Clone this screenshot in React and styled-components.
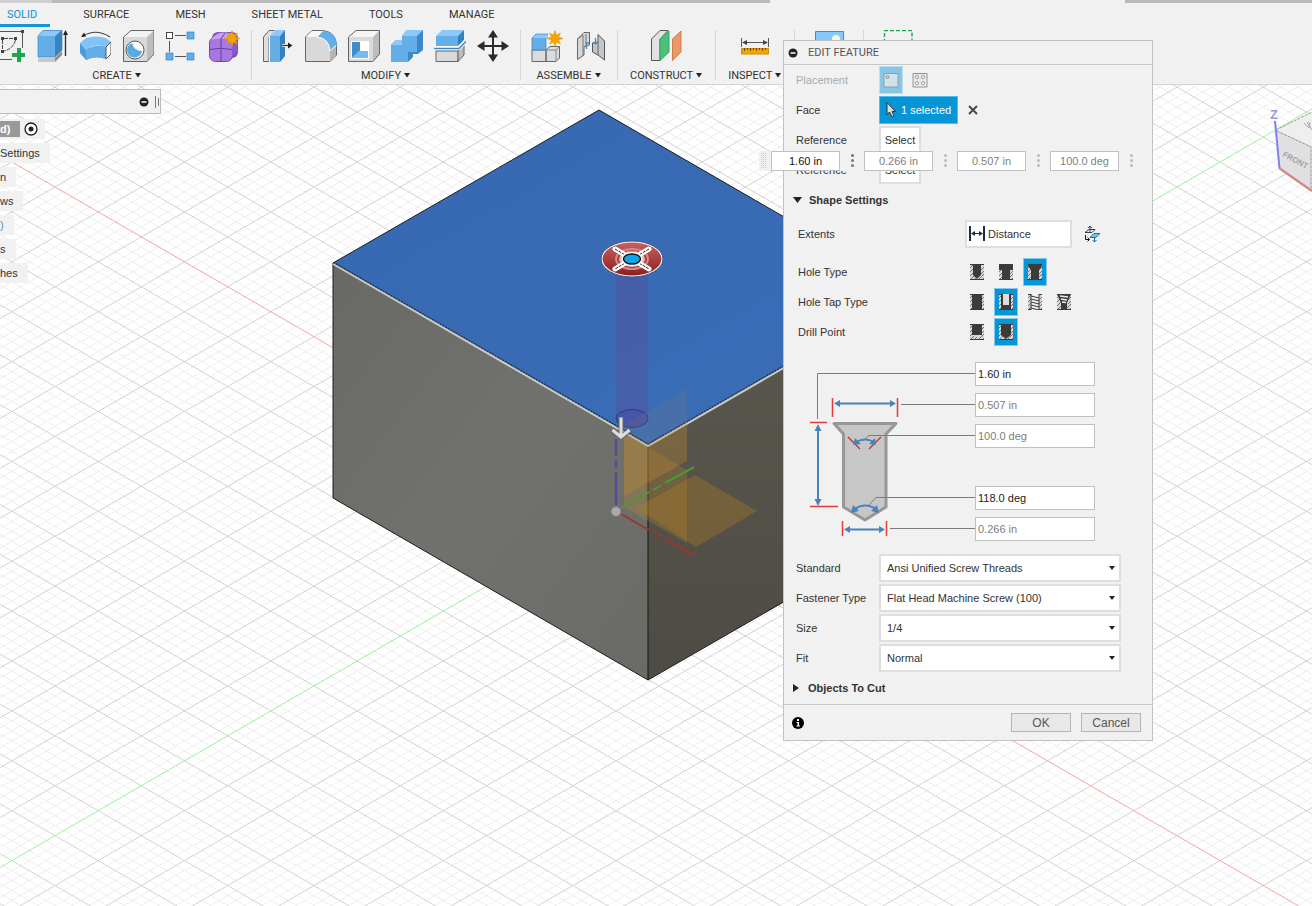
import React, { useState } from 'react'
import styled, { createGlobalStyle } from 'styled-components'

const GlobalStyle = createGlobalStyle`
    * { box-sizing: border-box; }

    body {
        margin: 0;
        background: #ffffff;
        color: #333333;
        font-family: 'Liberation Sans', Arial, sans-serif;
        font-size: 11px;
    }

    button, input, select {
        font: inherit;
        color: inherit;
    }

    svg { display: block; }
`;

const Workspace = styled.main`
    position: relative;
    display: flex;
    flex-flow: column nowrap;
    min-height: 100vh;
    overflow: hidden;
`;


// ---- Scene ----

const SceneLayer = styled.svg`
    position: absolute;
    top: 0;
    left: 0;
    width: 100%;
    height: 100%;
`;

const ViewCube = styled.svg`
    position: absolute;
    top: 100px;
    right: 0;
`;

const ORIGIN = { x: 616, y: 511.3 };
const SLOPE = 0.5782;
const STEP = 9.98;
const REACH = 3200;

const gridPath = (major) => {
    let d = '';
    for (let k = -200; k < 320; k += 1) {
        if ((k % 5 === 0) === major && !(major && k === 0)) {
            const down = ORIGIN.y - SLOPE * ORIGIN.x + k * STEP;
            const up = ORIGIN.y + SLOPE * ORIGIN.x + k * STEP;
            d += `M0 ${down}L${REACH} ${down + SLOPE * REACH}`;
            d += `M0 ${up}L${REACH} ${up - SLOPE * REACH}`;
        }
    }
    return d;
};

const minorGrid = gridPath(false);
const majorGrid = gridPath(true);

const Scene = () => (
    <SceneLayer aria-hidden="true">
        <defs>
            <linearGradient id="top" x1="0" y1="0" x2="1" y2="1">
                <stop offset="0" stopColor="#3768b2" />
                <stop offset="1" stopColor="#3b6eb8" />
            </linearGradient>
            <linearGradient id="left" x1="0" y1="0" x2="1" y2="1">
                <stop offset="0" stopColor="#696965" />
                <stop offset="0.5" stopColor="#71726d" />
                <stop offset="1" stopColor="#6a6b67" />
            </linearGradient>
            <linearGradient id="right" x1="0" y1="0" x2="0" y2="1">
                <stop offset="0" stopColor="#5b5850" />
                <stop offset="1" stopColor="#4e4b44" />
            </linearGradient>
            <linearGradient id="sink" x1="0" y1="0" x2="0" y2="1">
                <stop offset="0" stopColor="#c4605f" />
                <stop offset="1" stopColor="#8e1f1f" />
            </linearGradient>
        </defs>
        <path d={minorGrid} stroke="#eeeeee" fill="none" />
        <path d={majorGrid} stroke="#d2d2d2" fill="none" />
        <path d={`M0 ${511.3 - SLOPE * 616}L${REACH} ${511.3 + SLOPE * (REACH - 616)}`} stroke="#f5a3a3" />
        <path d={`M0 ${511.3 + SLOPE * 616}L${REACH} ${511.3 - SLOPE * (REACH - 616)}`} stroke="#9cf09c" />

        <path d="M599 110L914 292L648 445L333 263Z" fill="url(#top)" />
        <path d="M333 263L648 445V680L333 498Z" fill="url(#left)" />
        <path d="M648 445L914 292V527L648 680Z" fill="url(#right)" />
        <path d="M333 263L599 110L914 292V527L648 680L333 498Z" fill="none" stroke="#1c1c1c" />
        <path d="M648 446V680" stroke="#151515" />
        <path d="M333 263L648 445L914 292" fill="none" stroke="#1f2e48" strokeWidth="3" strokeDasharray="2 1" />
        <path d="M333 264L648 446L914 293" fill="none" stroke="#c9c9c5" strokeWidth="2" />

        <path d="M616 270H648V418A16 9 0 0 1 616 418Z" fill="#5351a0" fillOpacity="0.5" />
        <ellipse cx="632" cy="418.500" rx="16" ry="9" fill="#4a4aa0" fillOpacity="0.5" stroke="#263c86" />
        <path d="M624 425L687 389V461L624 498Z" fill="#b98a38" fillOpacity="0.1" />
        <path d="M624 432L648 446L687 424V461L624 496Z" fill="#c08a2a" fillOpacity="0.26" />
        <path d="M624 434L687 470V543L624 507Z" fill="#c08a2a" fillOpacity="0.26" />
        <path d="M636 508L695 475L757 511L696 547Z" fill="#b57d20" fillOpacity="0.34" />
        <path d="M616 439V456M616 460V468M616 472V505" stroke="#534b9b" strokeWidth="2.500" />
        <path d="M621 508L649 492M653 490L661 485.500M665 483L694 467" stroke="#4b9a30" strokeWidth="2" />
        <path d="M621 514L649 530M653 532L661 536.500M665 539L694 555" stroke="#96392f" strokeWidth="2" />
        <circle cx="616" cy="511.500" r="5" fill="#a9a9a9" stroke="#777777" />
        <path d="M621 417V436M612 430L621 438L630 430" fill="none" stroke="#6b6b6b" strokeWidth="5" />
        <path d="M621 417.500V436M612.500 430L621 437L629.500 430" fill="none" stroke="#dedede" strokeWidth="3" />

        <ellipse cx="632" cy="259" rx="31" ry="18" fill="#ffffff" stroke="#35538e" />
        <ellipse cx="632" cy="259" rx="29.500" ry="16.500" fill="url(#sink)" />
        <ellipse cx="632" cy="259" rx="16" ry="10" fill="none" stroke="#d08d8d" strokeWidth="2" />
        <ellipse cx="632" cy="259" rx="12" ry="7" fill="none" stroke="#e2b5b5" strokeWidth="2" />
        <path d="M615 249L649 269M649 249L615 269" stroke="#ffffff" strokeWidth="5" strokeLinecap="round" />
        <path d="M615 249L649 269M649 249L615 269" stroke="#222222" strokeDasharray="3 1" />
        <ellipse cx="632" cy="259" rx="11" ry="7" fill="#ffffff" />
        <ellipse cx="632" cy="259" rx="8.500" ry="5" fill="#10a5ea" stroke="#111111" strokeWidth="1.500" />
    </SceneLayer>
);

const Cube = () => (
    <ViewCube width="62" height="100" viewBox="0 0 62 100" aria-hidden="true">
        <path d="M26 30L62 12V92L30 68Z" fill="#e4e4e6" />
        <path d="M26 30L62 12V46Z" fill="#efeff0" />
        <path d="M26 30L61 47V89L30 67Z" fill="#e0e0e2" />
        <path d="M26 30L62 12M27 31L61 47V90" stroke="#9a9a9a" fill="none" strokeDasharray="3 1" />
        <path d="M29 68L62 91" stroke="#d48888" strokeWidth="2.500" />
        <path d="M25 21L29.500 68" stroke="#8080f0" strokeWidth="2" />
        <text x="20" y="19" fontSize="13" fontWeight="bold" fill="#9a9ae8">Z</text>
        <text x="32" y="56" fontSize="8" fontWeight="bold" fill="#a2a2a4" transform="rotate(28 32 56)">FRONT</text>
        <path d="M54 23L59 28L60 22M57 22L62 30" stroke="#a5a5a8" fill="none" />
    </ViewCube>
);


// ---- Toolbar ----

const Toolbar = styled.header`
    position: relative;
    flex: 0 0 auto;
    background: #f1f1f1;
    border-bottom: 1px solid #d4d4d4;
    font-family: Roboto, 'Liberation Sans', sans-serif;
    overflow: hidden;
`;

const TopStrip = styled.div`
    display: flex;
    height: 3px;
`;

const StripPart = styled.div`
    flex: ${props => props.$grow ? '1 0' : '0 0'} ${props => props.$width}px;
    background: ${props => props.$color};
`;

const Tabs = styled.nav`
    display: flex;
    gap: 20px;
    margin-left: -6px;
`;

const Tab = styled.button`
    height: 24px;
    padding: 2px 13px 0;
    border: 0;
    border-bottom: 3px solid ${props => props.$active ? '#1696d6' : 'transparent'};
    background: none;
    color: ${props => props.$active ? '#0a8fd0' : '#333333'};
    white-space: nowrap;
`;

const Groups = styled.div`
    display: flex;
    height: 57px;
    padding-top: 3px;
    margin-left: -17px;
`;

const Group = styled.section`
    display: flex;
    flex-flow: column nowrap;
    align-items: center;
    height: 50px;
    min-width: ${props => props.$min || 0}px;
    padding: 0 11px 0 10px;
    border-right: 1px solid #d6d6d6;

    &:last-child { border-right: 0; }
`;

const Tools = styled.div`
    display: flex;
    gap: 11px;
`;

const ToolButton = styled.button`
    width: 32px;
    height: 32px;
    padding: 0;
    border: 0;
    background: none;
`;

const GroupMenu = styled.button`
    display: flex;
    flex: 0 0 26px;
    align-items: center;
    gap: 3px;
    padding: 0 2px;
    border: 0;
    background: none;
    white-space: nowrap;
`;

const Icon = ({ size = 32, children }) => (
    <svg width={size} height={size} viewBox={`0 0 ${size} ${size}`} fill="none" aria-hidden="true">{children}</svg>
);

const Caret = () => (
    <svg width="6" height="5" viewBox="0 0 6 5" aria-hidden="true"><path d="M0 0H6L3 4.500Z" fill="#222222" /></svg>
);

const Star = ({ x, y }) => (
    <path
        transform={`translate(${x} ${y})`}
        d="M0 -8L1.500 -3.500L5.500 -5.500L3.500 -1.500L8 0L3.500 1.500L5.500 5.500L1.500 3.500L0 8L-1.500 3.500L-5.500 5.500L-3.500 1.500L-8 0L-3.500 -1.500L-5.500 -5.500L-1.500 -3.500Z"
        fill="#f5a300"
        stroke="#e08e00"
        strokeWidth="0.500"
    />
);

const icons = {
    sketch: (
        <Icon>
            <path d="M0 1.500H29.500V18M0 29.500H19" stroke="#555555" />
            <path d="M9.500 10V20M11 8.500H21M22.500 10Q20 19 11 21" stroke="#444444" strokeDasharray="4 1" />
            <path d="M28 0h3v3h-3zM8 7h3v3h-3zM21 7h3v3h-3zM8 20h3v3h-3z" fill="#444444" />
            <path d="M24 18h4v5h5v4h-5v5h-4v-5h-5v-4h5z" fill="#22a352" />
        </Icon>
    ),
    extrude: (
        <Icon>
            <path d="M2 28H19V32H2Z" fill="#c9c9c9" />
            <path d="M19 28L26 21V25L19 32Z" fill="#8d8d8d" />
            <path d="M2 6L7 0H26L19 6Z" fill="#8cc8fb" />
            <path d="M2 6H19V27H2Z" fill="#63aee6" />
            <path d="M19 6L26 0V20L19 27Z" fill="#3585c4" />
            <path d="M2 27V6L7 0.500H26V20L19 27Z" stroke="#4083b9" strokeWidth="0.700" />
            <path d="M29.500 4V26" stroke="#333333" strokeWidth="1.400" />
            <path d="M27 5L29.500 0L32 5Z" fill="#222222" />
        </Icon>
    ),
    revolve: (
        <Icon>
            <path d="M4 6Q17 -2 31 7" stroke="#444444" strokeWidth="1.200" />
            <path d="M2 7L5 2.500L7 6.500Z" fill="#222222" />
            <path d="M1 13L7 8Q17 5 27 8L32 12L27 17Q16 13 7 20Z" fill="#82c2f6" />
            <path d="M1 13L7 20Q16 14 27 17V29Q16 25 7 30L1 23Z" fill="#4a9bd9" />
            <path d="M7 20Q16 14 27 17V29Q16 25 7 30Z" fill="#62aee8" />
            <path d="M27 17L32 12V24L27 29Z" fill="#ffffff" stroke="#555555" />
        </Icon>
    ),
    hole: (
        <Icon>
            <path d="M1.500 7L9 0.500H32L25 7Z" fill="#f3f3f3" />
            <path d="M25 7L32 0.500V24L25 31.500Z" fill="#bdbdbd" />
            <path d="M1.500 7H25V31.500H1.500Z" fill="#d9d9d9" />
            <path d="M1.500 31.500V7L9 0.500H32V24L25 31.500Z" stroke="#666666" />
            <circle cx="13" cy="20" r="9" fill="#ffffff" stroke="#555555" />
            <path d="M10 13Q12 21 20 21A7.500 7.500 0 1 1 10 13Z" fill="#5aa9e3" />
        </Icon>
    ),
    pattern: (
        <Icon>
            <path d="M10 5.500H21M4.500 11V22M10 26.500H21" stroke="#555555" />
            <rect x="1.500" y="2.500" width="6" height="6" fill="#ffffff" stroke="#444444" />
            <path d="M22 2h7v7h-7zM1 23h7v7h-7zM22 23h7v7h-7z" fill="#62aee8" stroke="#3c83bb" strokeWidth="0.700" />
        </Icon>
    ),
    form: (
        <Icon>
            <rect x="4" y="2" width="26" height="26" rx="6" fill="#7b4fc0" />
            <rect x="1.500" y="7" width="23" height="24.500" rx="6" fill="#a878e2" stroke="#7145b3" />
            <path d="M3 10Q8 2 16 2.500Q24 3 27 5L23 10Q12 7 3 10Z" fill="#c9a2f2" />
            <path d="M2 19.500Q12 17 24 19.500L29 15M13 9V31M13 9L17 3" stroke="#693ba9" />
            <path d="M24 10V27L29 21V7Z" fill="#8a5acb" />
            <Star x={24} y={8.500} />
        </Icon>
    ),
    pressPull: (
        <Icon>
            <path d="M1.500 7L7 0.500H13L7 7V31.500H1.500Z" fill="#dedede" stroke="#666666" />
            <path d="M7 6L13 0H14L8 6V32H7Z" fill="#ffffff" />
            <path d="M8 6L14 0H23L18 6Z" fill="#8cc8fb" />
            <path d="M8 6H18V32H8Z" fill="#63aee6" />
            <path d="M18 6L23 0V26L18 32Z" fill="#3381bd" />
            <path d="M20 15.500H26" stroke="#ffffff" strokeWidth="3" />
            <path d="M20 15.500H27" stroke="#333333" strokeWidth="1.400" />
            <path d="M26 12.500L30.500 15.500L26 18.500Z" fill="#222222" />
        </Icon>
    ),
    fillet: (
        <Icon>
            <path d="M0.500 31.500V7L7 0.500H18Q31 3 31.500 17V25L25 31.500Z" fill="#d9d9d9" stroke="#666666" />
            <path d="M1 7L7 1H18L12 7Z" fill="#f8f8f8" />
            <path d="M25 21L31 16V25L25 31Z" fill="#b6b6b6" />
            <path d="M12 7L18 0.500Q31 2 31.500 15L25 21Q24 8 12 7Z" fill="#63aee6" stroke="#ffffff" />
            <path d="M18 0.500Q31 2 31.500 15" stroke="#3c83bb" />
        </Icon>
    ),
    shell: (
        <Icon>
            <path d="M0.500 7L8 0.500H31.500L25 7Z" fill="#f5f5f5" />
            <path d="M25 7L31.500 0.500V24L25 31.500Z" fill="#bdbdbd" />
            <path d="M0.500 7H25V31.500H0.500Z" fill="#dadada" />
            <path d="M0.500 31.500V7L8 0.500H31.500V24L25 31.500Z" stroke="#666666" />
            <path d="M3 11H21V29H3Z" fill="#ffffff" />
            <path d="M4 12H12V21L4 28Z" fill="#3f8dcb" />
            <path d="M4 28L11 21H20V28Z" fill="#72bbf3" />
        </Icon>
    ),
    combine: (
        <Icon>
            <path d="M11 6L16 0H32V20L27 24H22L22 27L17 32H0V15L5 10H11Z" fill="#3a8aca" />
            <path d="M11 6L16 0H32L26 6Z" fill="#8cc8fb" />
            <path d="M0 15L5 10H11V15Z" fill="#8cc8fb" />
            <path d="M11 6H26V22H17V32H0V15H11Z" fill="#63aee6" />
        </Icon>
    ),
    split: (
        <Icon>
            <path d="M2 21H24V31.500H2Z" fill="#dadada" stroke="#666666" />
            <path d="M24 21L30 15V25L24 31.500Z" fill="#bcbcbc" stroke="#666666" />
            <path d="M2 6L8 0H30L24 6Z" fill="#8cc8fb" />
            <path d="M2 6H24V16H2Z" fill="#63aee6" />
            <path d="M24 6L30 0V10L24 16Z" fill="#3381bd" />
            <path d="M0 18H25L32 11" stroke="#ffffff" strokeWidth="4" />
            <path d="M0 18.500H25L32 11.500" stroke="#3587c8" strokeWidth="1.500" />
        </Icon>
    ),
    move: (
        <Icon>
            <path d="M16 4V28M4 16H28" stroke="#2b2b2b" strokeWidth="2" />
            <path d="M11 7.500L16 0L21 7.500ZM11 24.500L16 32L21 24.500ZM7.500 11L0 16L7.500 21ZM24.500 11L32 16L24.500 21Z" fill="#2b2b2b" />
        </Icon>
    ),
    component: (
        <Icon>
            <path d="M1 20H15V31.500H1ZM15 20L19 16.500H28.500V28L25 31.500H15Z" fill="#dcdcdc" stroke="#666666" />
            <path d="M15 20H25L28.500 16.500M25 20V31" stroke="#888888" />
            <path d="M1 8L5 4H17L15 8V20H1Z" fill="#63aee6" stroke="#3c83bb" strokeWidth="0.700" />
            <path d="M1.500 8L5 4.500H17V8Z" fill="#8cc8fb" />
            <Star x={24} y={8.500} />
        </Icon>
    ),
    joint: (
        <Icon>
            <path d="M3.500 9L10 2.500H15.500V15L10 17V25L3.500 29.500Z" fill="#d5d5d5" stroke="#666666" />
            <path d="M3.500 9L9 5V26M12 4V16" stroke="#777777" />
            <path d="M24 4.500L30.500 11V30L24 25L18.500 22V13L24 12Z" fill="#c5c5c5" stroke="#555555" />
            <path d="M24 12V25" stroke="#666666" />
            <path d="M12.500 19V13H15M21.500 8V14M19 12L21.500 14L24 12" stroke="#3f8dcb" strokeWidth="1.300" />
        </Icon>
    ),
    plane: (
        <Icon>
            <path d="M1.500 9L10 0.500H18L10 9V30.500H1.500Z" fill="#e2e2e2" stroke="#555555" />
            <path d="M10 9L19 1V22L10 30.500Z" fill="#4cc07a" stroke="#35a864" />
            <path d="M22.500 9L31 1V22L22.500 30.500Z" fill="#e99a68" stroke="#cf7c4a" />
        </Icon>
    ),
    measure: (
        <Icon>
            <path d="M2.500 8V17M29.500 8V17M4 12.500H28" stroke="#555555" />
            <path d="M3 12.500L8 10V15ZM29 12.500L24 10V15Z" fill="#444444" />
            <path d="M2.500 18.500H29.500V24H2.500Z" fill="#f5a300" stroke="#d18a00" />
            <path d="M5.500 18V21M8.500 18V20M11.500 18V21M14.500 18V20M17.500 18V21M20.500 18V20M23.500 18V21M26.500 18V20" stroke="#6a4b10" />
        </Icon>
    ),
    insert: (
        <Icon>
            <path d="M2.500 1.500H30.500V31H2.500Z" fill="#84c9fb" stroke="#3f8dcb" />
            <circle cx="23" cy="9" r="4" fill="#fbf7d0" />
        </Icon>
    ),
    select: (
        <Icon>
            <path d="M2.500 31V0.500H30V31" stroke="#22a352" strokeWidth="1.400" strokeDasharray="4 2" />
        </Icon>
    ),
};

const toolGroups = [
    { label: 'CREATE', tools: ['sketch', 'extrude', 'revolve', 'hole', 'pattern', 'form'] },
    { label: 'MODIFY', tools: ['pressPull', 'fillet', 'shell', 'combine', 'split', 'move'] },
    { label: 'ASSEMBLE', tools: ['component', 'joint'] },
    { label: 'CONSTRUCT', tools: ['plane'] },
    { label: 'INSPECT', tools: ['measure'] },
    { tools: ['insert'], min: 69 },
    { tools: ['select'], min: 69 },
];

const tabs = ['SOLID', 'SURFACE', 'MESH', 'SHEET METAL', 'TOOLS', 'MANAGE'];


// ---- Browser ----

const Browser = styled.aside`
    position: relative;
    display: flex;
    flex-flow: column nowrap;
    align-items: flex-start;
    gap: 4px;
    padding-top: 4px;
`;

const BrowserBar = styled.div`
    display: flex;
    align-items: center;
    justify-content: flex-end;
    gap: 6px;
    width: 161px;
    height: 25px;
    margin-bottom: 1px;
    padding-right: 1px;
    background: #f1f1f1;
    border: 1px solid #bcbcbc;
    border-left: 0;
`;

const BrowserItem = styled.div`
    display: flex;
    align-items: center;
    gap: 4px;
    height: 20px;
    padding-right: ${props => props.$root ? 7 : 10}px;
    background: #f1f1f1;
    color: ${props => props.$accent ? '#3a9dc9' : '#333333'};
`;

const RootName = styled.span`
    height: 16px;
    padding-right: 10px;
    background: #999999;
    color: #ffffff;
    font-weight: bold;
    line-height: 16px;
`;

const RoundButton = styled.button`
    padding: 0;
    border: 0;
    background: none;
`;

const MinusIcon = () => (
    <Icon size={10}>
        <circle cx="5" cy="5" r="4.500" fill="#222222" />
        <path d="M2.500 5H7.500" stroke="#ffffff" strokeWidth="1.500" />
    </Icon>
);


// ---- Edit Feature panel ----

const Panel = styled.section`
    position: absolute;
    top: 40px;
    right: 159px;
    width: 370px;
    background: #f1f1f1;
    border: 1px solid #c2c2c2;
`;

const PanelHeader = styled.header`
    display: flex;
    align-items: center;
    gap: 10px;
    height: 24px;
    padding-left: 4px;
    border-bottom: 1px solid #c8c8c8;
    color: #555555;
    font-family: Roboto, 'Liberation Sans', sans-serif;
`;

const PanelTitle = styled.h2`
    margin: 0;
    font-size: 11px;
    font-weight: normal;
`;

const Row = styled.div`
    display: grid;
    grid-template-columns: ${props => props.$wide ? 167 : 83}px 1fr;
    align-items: center;
    height: ${props => props.$tall ? 38 : 30}px;
    padding-left: ${props => props.$wide ? 14 : 12}px;
`;

const HoleRows = styled.div`
    padding-top: 4px;
`;

const Label = styled.label`
    color: ${props => props.$dim ? '#aaaaaa' : '#333333'};
    white-space: nowrap;
`;

const Choices = styled.div`
    display: flex;
    align-items: center;
    gap: ${props => props.$gap || 0}px;
`;

const Choice = styled.button`
    display: flex;
    justify-content: center;
    align-items: center;
    width: 24px;
    height: 28px;
    padding: 0;
    border: 1px solid ${props => props.$on ? '#7fc8ec' : 'transparent'};
    background: ${props => props.$on ? '#0696d7' : 'transparent'};
    opacity: ${props => props.disabled ? 0.45 : 1};
`;

const Picked = styled.button`
    display: flex;
    align-items: center;
    gap: 5px;
    height: 28px;
    padding: 0 6px;
    border: 1px solid #56bdeb;
    background: #0696d7;
    color: #ffffff;
`;

const PickButton = styled.button`
    width: 42px;
    height: 28px;
    padding: 0;
    border: 2px solid #dedede;
    background: #ffffff;
`;

const SectionTitle = styled.button`
    display: flex;
    align-items: center;
    gap: 7px;
    width: 100%;
    height: 30px;
    padding: 0 9px;
    border: 0;
    background: none;
    font-weight: bold;
    text-align: left;
`;

const SelectBox = styled.div`
    display: grid;
    grid-template-columns: 20px 1fr 14px;
    align-items: center;
    width: ${props => props.$width}px;
    height: 28px;
    border: 2px solid #dedede;
    background: #ffffff;

    svg {
        grid-row: 1;
        grid-column: ${props => props.$lead ? 1 : 3};
        justify-self: center;
        pointer-events: none;
        z-index: 1;
    }
`;

const Dropdown = styled.select`
    grid-row: 1;
    grid-column: 1 / 4;
    width: 100%;
    height: 24px;
    padding: 0 0 0 ${props => props.$lead ? 21 : 6}px;
    border: 0;
    background: none;
    appearance: none;
`;

const Diagram = styled.div`
    display: flex;
    align-items: flex-start;
    padding-top: 11px;
    height: 206px;
`;

const DiagramStacks = styled.div`
    display: flex;
    flex-flow: column nowrap;
    gap: 38px;
    padding-top: 4px;
`;

const Stack = styled.div`
    display: flex;
    flex-flow: column nowrap;
    gap: 7px;
`;

const DimensionInput = styled.input`
    width: 120px;
    height: 24px;
    padding: 0 2px;
    border: 1px solid #c0c0c0;
    background: #ffffff;
    color: ${props => props.readOnly ? '#7d7d7d' : '#222222'};
`;

const PanelFooter = styled.footer`
    display: flex;
    justify-content: flex-end;
    align-items: center;
    gap: 10px;
    height: 36px;
    margin-top: 1px;
    padding: 0 11px 0 8px;
    border-top: 1px solid #c8c8c8;
`;

const InfoButton = styled(RoundButton)`
    margin-right: auto;
`;

const DialogButton = styled.button`
    width: 60px;
    height: 19px;
    padding: 0;
    border: 1px solid #b5b5b5;
    background: #e8e8e8;
    color: #555555;
    font-size: 12px;
`;

// sits over the reference rows
const FloatingBar = styled.div`
    position: absolute;
    top: 110px;
    left: -25px;
    display: flex;
    align-items: center;
    height: 20px;
    background: #f1f1f1;
`;

const FloatingInput = styled.input`
    width: 69px;
    height: 20px;
    padding: 0;
    border: 1px solid #c0c0c0;
    background: #ffffff;
    color: ${props => props.readOnly ? '#808080' : '#111111'};
    text-align: center;
`;

const Grip = styled.svg`
    margin: 0 1px 0 0;
`;

const Dots = ({ dark }) => (
    <svg width="24" height="20" viewBox="0 0 24 20" fill={dark ? '#777777' : '#bbbbbb'} aria-hidden="true">
        <circle cx="12.500" cy="4.500" r="1.500" />
        <circle cx="12.500" cy="9.500" r="1.500" />
        <circle cx="12.500" cy="14.500" r="1.500" />
    </svg>
);

const dark = '#3b3b3b';

const bores = {
    simple: <path d="M4 0H12V11L8 15L4 11Z" fill={dark} />,
    counterbore: <path d="M1 0H15V6H12V16H4V6H1Z" fill={dark} />,
    countersink: <path d="M1 0H15V2L12 6V16H4V6L1 2Z" fill={dark} />,
    untapped: <path d="M3 0H13V16H3Z" fill={dark} />,
    clearance: <><path d="M3 0H13V15H3Z" fill={dark} /><path d="M5 0H11V11H5Z" fill="#dddddd" /></>,
    tapped: <><path d="M4 0H12V16H4Z" fill="#eeeeee" /><path d="M4 0V16M12 0V16M4 2L12 4M4 5L12 7M4 8L12 10M4 11L12 13M4 14L12 16" stroke={dark} /></>,
    taper: <><path d="M1 0H15L11 9V16H5V9Z" fill={dark} /><path d="M4 2L12 3M5 5L11 6M6 8L10 8.500" stroke="#eeeeee" strokeWidth="1.500" /></>,
    flat: <path d="M3 0H13V11H3Z" fill={dark} />,
    angle: <path d="M3 0H13V11L8 15L3 11Z" fill={dark} />,
};

const BoreIcon = ({ kind }) => (
    <Icon size={16}>
        <path d="M1 0H15V16H1Z" fill="#d8d8d8" />
        <path d="M1 4L4 1M1 8L5 4M1 12L5 8M1 16L5 12M5 16L8 13M9 16L15 10M12 6L15 3M12 10L15 7M13 16L15 14" stroke="#777777" />
        <path d="M1 0.500H15M1 15.500H15" stroke={dark} />
        {bores[kind]}
    </Icon>
);

const holeRows = [
    { label: 'Hole Type', kinds: ['simple', 'counterbore', 'countersink'], initial: 'countersink' },
    { label: 'Hole Tap Type', kinds: ['untapped', 'clearance', 'tapped', 'taper'], initial: 'clearance' },
    { label: 'Drill Point', kinds: ['flat', 'angle'], initial: 'angle' },
];

const fastenerRows = [
    { id: 'standard', label: 'Standard', value: 'Ansi Unified Screw Threads' },
    { id: 'fastener', label: 'Fastener Type', value: 'Flat Head Machine Screw (100)' },
    { id: 'size', label: 'Size', value: '1/4' },
    { id: 'fit', label: 'Fit', value: 'Normal' },
];

const HoleRow = ({ label, kinds, initial }) => {
    const [active, setActive] = useState(initial);
    return (
        <Row $wide>
            <span>{label}</span>
            <Choices $gap={5} role="group" aria-label={label}>
                {kinds.map(kind => (
                    <Choice
                        key={kind}
                        type="button"
                        aria-label={kind}
                        aria-pressed={kind === active}
                        $on={kind === active}
                        onClick={() => setActive(kind)}
                    >
                        <BoreIcon kind={kind} />
                    </Choice>
                ))}
            </Choices>
        </Row>
    );
};

const HoleDrawing = () => (
    <svg width="191" height="188" viewBox="0 0 191 188" fill="none" aria-hidden="true">
        <path d="M50 65.500H112L102 76V149L81 162L59.500 149V76Z" fill="#c7c7c7" stroke="#979797" strokeWidth="3" strokeLinejoin="round" />
        <path d="M33.500 61V15.500H191M117 46.500H191M79 83L85 77.500H191M84 148L92 139.500H191M106 170.500H191" stroke="#7c7c7c" />
        <path d="M48.500 40V59M113.500 40V59M26 64.500H43M26 148.500H54M58.500 163V178M102.500 163V178" stroke="#e63b3b" strokeWidth="1.500" />
        <path d="M64 79L76 91M97 79L85 91" stroke="#d81f1f" strokeWidth="1.200" />
        <path d="M54 45.500H108M34 71V143M64 171.500H97M72 84Q81 79 90 84M71 151Q81 144 92 151" stroke="#4a83ba" strokeWidth="2" />
        <path d="M50 45.500L56 42V49ZM112 45.500L106 42V49ZM34 66L30.500 73H37.500ZM34 148L30.500 141H37.500ZM60 171.500L66 168V175ZM101 171.500L95 168V175ZM69 87L71 80L77 86ZM92 87L85 86L91 80ZM67 155L69 147L75 153ZM95 155L87 153L93 147Z" fill="#4a83ba" />
    </svg>
);

const EditFeature = () => (
    <Panel aria-label="Edit feature">
        <PanelHeader>
            <RoundButton type="button" aria-label="Collapse"><MinusIcon /></RoundButton>
            <PanelTitle>EDIT FEATURE</PanelTitle>
        </PanelHeader>
        <Row>
            <Label as="span" $dim>Placement</Label>
            <Choices $gap={5}>
                <Choice type="button" aria-label="Single hole" $on disabled>
                    <Icon size={16}>
                        <path d="M1 1.500H15V15H1Z" fill="#a9d3e8" stroke="#234" />
                        <circle cx="4.500" cy="5" r="1.500" fill="#6fa2c4" stroke="#234" />
                    </Icon>
                </Choice>
                <Choice type="button" aria-label="Multiple holes" disabled>
                    <Icon size={16}>
                        <path d="M1 1.500H15V15H1Z" fill="#e5e5e5" stroke="#222" />
                        <circle cx="5" cy="5" r="1.700" stroke="#445" />
                        <circle cx="11" cy="5" r="1.700" stroke="#445" />
                        <circle cx="5" cy="11" r="1.700" stroke="#445" />
                        <circle cx="11" cy="11" r="1.700" stroke="#445" />
                    </Icon>
                </Choice>
            </Choices>
        </Row>
        <Row>
            <span>Face</span>
            <Choices $gap={10}>
                <Picked type="button">
                    <svg width="10" height="16" viewBox="0 0 10 16" aria-hidden="true">
                        <path d="M1 0.500V12.500L3.500 10L6 15L8 14L6 9.500H9.500Z" fill="#dddddd" stroke="#333333" />
                    </svg>
                    1 selected
                </Picked>
                <RoundButton type="button" aria-label="Clear">
                    <Icon size={10}><path d="M1 1L9 9M9 1L1 9" stroke="#4a4a4a" strokeWidth="2" /></Icon>
                </RoundButton>
            </Choices>
        </Row>
        <Row>
            <span>Reference</span>
            <PickButton type="button">Select</PickButton>
        </Row>
        <Row>
            <span>Reference</span>
            <PickButton type="button">Select</PickButton>
        </Row>
        <FloatingBar>
            <Grip width="11" height="20" viewBox="0 0 11 20" aria-hidden="true">
                <path d="M2.500 2V18M4.500 2V18M6.500 2V18" stroke="#c9c9c9" strokeDasharray="1 1" />
            </Grip>
            <FloatingInput aria-label="Depth" defaultValue="1.60 in" />
            <Dots dark />
            <FloatingInput aria-label="Diameter" defaultValue="0.266 in" readOnly />
            <Dots />
            <FloatingInput aria-label="Head diameter" defaultValue="0.507 in" readOnly />
            <Dots />
            <FloatingInput aria-label="Head angle" defaultValue="100.0 deg" readOnly />
            <Dots />
        </FloatingBar>
        <SectionTitle type="button" aria-expanded="true">
            <svg width="9" height="6" viewBox="0 0 9 6" aria-hidden="true"><path d="M0 0H9L4.500 6Z" fill="#222222" /></svg>
            Shape Settings
        </SectionTitle>
        <Row $wide $tall>
            <Label htmlFor="extents">Extents</Label>
            <Choices $gap={12}>
                <SelectBox $width={107} $lead>
                    <Dropdown id="extents" $lead>
                        <option>Distance</option>
                    </Dropdown>
                    <svg width="18" height="16" viewBox="0 0 18 16" aria-hidden="true">
                        <path d="M2 0V15M16 0V15" stroke="#1c2a4a" strokeWidth="2" />
                        <path d="M4 7.500H14" stroke="#1c2a4a" />
                        <path d="M3 7.500L7 5V10ZM15 7.500L11 5V10Z" fill="#1c2a4a" />
                    </svg>
                </SelectBox>
                <RoundButton type="button" aria-label="Flip direction">
                    <Icon size={16}>
                        <path d="M1 6.500L5 3.500H11L8 6.500ZM6 0V6M4 2L6 0L8 2" stroke="#34405a" />
                        <path d="M6 11.500L10 7.500H16L12 11.500Z" fill="#7cc0ee" stroke="#2469a0" />
                        <path d="M10.500 11V16M8.500 14L10.500 16L12.500 14" stroke="#2469a0" />
                        <path d="M1.500 9V13.500H5M3.500 11.500L5.500 13.500L3.500 15.500" stroke="#111111" />
                    </Icon>
                </RoundButton>
            </Choices>
        </Row>
        <HoleRows>
            {holeRows.map(row => <HoleRow key={row.label} {...row} />)}
        </HoleRows>
        <Diagram>
            <HoleDrawing />
            <DiagramStacks>
                <Stack>
                    <DimensionInput aria-label="Hole depth" defaultValue="1.60 in" />
                    <DimensionInput aria-label="Countersink diameter" defaultValue="0.507 in" readOnly />
                    <DimensionInput aria-label="Countersink angle" defaultValue="100.0 deg" readOnly />
                </Stack>
                <Stack>
                    <DimensionInput aria-label="Drill point angle" defaultValue="118.0 deg" />
                    <DimensionInput aria-label="Hole diameter" defaultValue="0.266 in" readOnly />
                </Stack>
            </DiagramStacks>
        </Diagram>
        {fastenerRows.map(({ id, label, value }) => (
            <Row key={id}>
                <Label htmlFor={id}>{label}</Label>
                <SelectBox $width={242}>
                    <Dropdown id={id}>
                        <option>{value}</option>
                    </Dropdown>
                    <svg width="6" height="4" viewBox="0 0 6 4" aria-hidden="true">
                        <path d="M0 0H6L3 4Z" fill="#222222" />
                    </svg>
                </SelectBox>
            </Row>
        ))}
        <SectionTitle type="button" aria-expanded="false">
            <svg width="8" height="8" viewBox="0 0 8 8" aria-hidden="true"><path d="M0 0L6 4L0 8Z" fill="#222222" /></svg>
            Objects To Cut
        </SectionTitle>
        <PanelFooter>
            <InfoButton type="button" aria-label="Info">
                <Icon size={12}>
                    <circle cx="6" cy="6" r="6" fill="#000000" />
                    <path d="M5 2h2v2h-2zM4.500 5h2.500v3.500h1v1h-3.500v-1h1v-2.500h-1z" fill="#ffffff" />
                </Icon>
            </InfoButton>
            <DialogButton type="button">OK</DialogButton>
            <DialogButton type="button">Cancel</DialogButton>
        </PanelFooter>
    </Panel>
);


export default () => (
    <Workspace>
        <GlobalStyle />
        <Scene />
        <Cube />
        <Toolbar>
            <TopStrip>
                <StripPart $width={52} $color="#d0d0d0" />
                <StripPart $width={718} $color="#bababa" />
                <StripPart $width={355} $color="#f1f1f1" />
                <StripPart $width={0} $color="#bababa" $grow />
            </TopStrip>
            <Tabs>
                {tabs.map((tab, i) => <Tab key={tab} type="button" $active={i === 0}>{tab}</Tab>)}
            </Tabs>
            <Groups>
                {toolGroups.map(({ label, tools, min }) => (
                    <Group key={tools[0]} $min={min}>
                        <Tools>
                            {tools.map(tool => (
                                <ToolButton key={tool} type="button" aria-label={tool}>{icons[tool]}</ToolButton>
                            ))}
                        </Tools>
                        {label && <GroupMenu type="button">{label}<Caret /></GroupMenu>}
                    </Group>
                ))}
            </Groups>
        </Toolbar>
        <Browser>
            <BrowserBar>
                <RoundButton type="button" aria-label="Collapse browser"><MinusIcon /></RoundButton>
                <svg width="4" height="12" viewBox="0 0 4 12" aria-hidden="true"><path d="M0.500 0V12M3.500 2V10" stroke="#777777" /></svg>
            </BrowserBar>
            <BrowserItem $root>
                <RootName>d)</RootName>
                <Icon size={14}>
                    <circle cx="7" cy="7" r="6" fill="#ffffff" stroke="#222222" strokeWidth="1.300" />
                    <circle cx="7" cy="7" r="2.500" fill="#222222" />
                </Icon>
            </BrowserItem>
            <BrowserItem>Settings</BrowserItem>
            <BrowserItem>n</BrowserItem>
            <BrowserItem>ws</BrowserItem>
            <BrowserItem $accent>)</BrowserItem>
            <BrowserItem>s</BrowserItem>
            <BrowserItem>hes</BrowserItem>
        </Browser>
        <EditFeature />
    </Workspace>
)
